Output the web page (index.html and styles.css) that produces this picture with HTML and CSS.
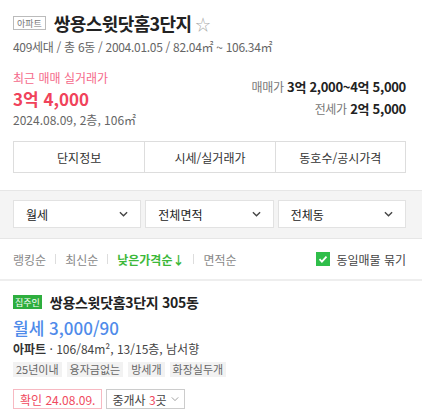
FILE: index.html
```html
<!DOCTYPE html>
<html lang="ko">
  <head>
    <meta charset="UTF-8" />
    <meta name="viewport" content="width=device-width, initial-scale=1" />
    <title>쌍용스윗닷홈3단지</title>
    <link rel="stylesheet" href="styles.css">
  </head>
  <body>
    <!-- 단지 요약 -->
    <div class="summary">
      <div class="title-row">
        <span class="type-badge">아파트</span>
        <h1 class="title">쌍용스윗닷홈3단지</h1>
        <span class="star">☆</span>
      </div>
      <div class="meta">409세대 / 총 6동 / 2004.01.05 / 82.04㎡ ~ 106.34㎡</div>

      <div class="price-row">
        <div class="recent">
          <div class="recent-label">최근 매매 실거래가</div>
          <div class="recent-price">3억 4,000</div>
          <div class="recent-date">2024.08.09, 2층, 106㎡</div>
        </div>
        <div class="ranges">
          <div class="range"><span class="range-label">매매가</span> <b>3억 2,000~4억 5,000</b></div>
          <div class="range"><span class="range-label">전세가</span> <b>2억 5,000</b></div>
        </div>
      </div>

      <div class="tabs">
        <button class="tab">단지정보</button>
        <button class="tab">시세/실거래가</button>
        <button class="tab">동호수/공시가격</button>
      </div>
    </div>

    <!-- 필터 -->
    <div class="filters">
      <div class="select">월세 <svg class="chev" viewBox="0 0 10 6"><path d="M1 1l4 4 4-4" /></svg></div>
      <div class="select">전체면적 <svg class="chev" viewBox="0 0 10 6"><path d="M1 1l4 4 4-4" /></svg></div>
      <div class="select">전체동 <svg class="chev" viewBox="0 0 10 6"><path d="M1 1l4 4 4-4" /></svg></div>
    </div>

    <!-- 정렬 -->
    <div class="sort-row">
      <div class="sorts">
        <span>랭킹순</span><i class="sep"></i>
        <span>최신순</span><i class="sep"></i>
        <span class="on">낮은가격순↓</span><i class="sep"></i>
        <span>면적순</span>
      </div>
      <label class="bundle">
        <span class="check"><svg viewBox="0 0 14 14"><path d="M3.5 7.2l2.4 2.4 4.6-5" /></svg></span>
        동일매물 묶기
      </label>
    </div>

    <!-- 매물 -->
    <div class="item">
      <div class="item-title">
        <span class="owner-badge">집주인</span>
        <span class="item-name">쌍용스윗닷홈3단지 305동</span>
      </div>
      <div class="item-price">월세 3,000/90</div>
      <div class="item-spec"><b>아파트</b> · 106/84m², 13/15층, 남서향</div>
      <div class="tags">
        <span class="tag">25년이내</span>
        <span class="tag">융자금없는</span>
        <span class="tag">방세개</span>
        <span class="tag">화장실두개</span>
      </div>
      <div class="item-foot">
        <span class="confirm">확인 24.08.09.</span>
        <span class="agents">중개사&nbsp;<em>3</em>곳<svg class="chev small" viewBox="0 0 10 6"><path d="M1 1l4 4 4-4" /></svg></span>
      </div>
    </div>
  </body>
</html>
```

FILE: styles.css
```css
* {
  box-sizing: border-box;
}
html,
body {
  margin: 0;
  padding: 0;
  background: #fff;
  color: #222;
  font-family: "Noto Sans CJK KR", "Noto Sans", sans-serif;
  font-size: 12px;
  overflow: hidden;
}

/* 단지 요약 */
.summary {
  padding: 10px 16px 0 13px;
}
.title-row {
  display: flex;
  align-items: center;
  height: 26px;
}
.type-badge {
  display: inline-flex;
  align-items: center;
  height: 14px;
  padding: 0 3px;
  border: 1px solid #bbb;
  color: #777;
  font-size: 9px;
  margin-right: 8px;
}
.title {
  margin: 0;
  font-size: 18px;
  font-weight: bold;
  letter-spacing: -0.6px;
  color: #222;
}
.star {
  margin-left: 4px;
  font-size: 15px;
  color: #aaa;
}
.meta {
  margin-top: 2px;
  font-size: 12px;
  color: #666;
  letter-spacing: -0.3px;
}
.price-row {
  display: flex;
  justify-content: space-between;
  margin-top: 14px;
}
.recent-label {
  color: #f5688a;
  font-size: 12px;
}
.recent-price {
  margin-top: 1px;
  color: #f0435b;
  font-size: 17px;
  font-weight: bold;
  line-height: 24px;
}
.recent-date {
  color: #666;
  font-size: 12px;
}
.ranges {
  margin-top: 7px;
  text-align: right;
  line-height: 22px;
}
.range {
  font-size: 13px;
  color: #222;
  letter-spacing: -0.3px;
}
.range b {
  font-weight: 600;
}
.range-label {
  color: #777;
  font-size: 12px;
}
.tabs {
  display: grid;
  grid-template-columns: repeat(3, 1fr);
  margin-top: 13px;
  border: 1px solid #ddd;
}
.tab {
  height: 30px;
  border: none;
  border-left: 1px solid #ddd;
  background: #fff;
  font-family: inherit;
  font-size: 12px;
  color: #333;
  padding: 0;
}
.tab:first-child {
  border-left: none;
}

/* 필터 */
.filters {
  display: grid;
  grid-template-columns: repeat(3, 1fr);
  gap: 4px;
  margin-top: 17px;
  padding: 9px 16px 10px 13px;
  background: #f4f4f4;
  border-top: 1px solid #e6e6e6;
  border-bottom: 1px solid #e6e6e6;
}
.select {
  display: flex;
  justify-content: space-between;
  align-items: center;
  height: 28px;
  padding: 0 12px 0 12px;
  background: #fff;
  border: 1px solid #e2e2e2;
  font-size: 12px;
  color: #222;
}
.chev {
  width: 9px;
  height: 6px;
  fill: none;
  stroke: #444;
  stroke-width: 1.5;
}
.chev.small {
  width: 8px;
  margin-left: 4px;
  stroke: #888;
  stroke-width: 1;
}

/* 정렬 */
.sort-row {
  display: flex;
  justify-content: space-between;
  align-items: center;
  height: 42px;
  padding: 0 16px 0 13px;
  border-bottom: 2px solid #eee;
}
.sorts {
  display: flex;
  align-items: center;
  color: #888;
  font-size: 12px;
}
.sorts .on {
  color: #3cb83a;
  font-weight: bold;
}
.sep {
  width: 1px;
  height: 10px;
  background: #ddd;
  margin: 0 9px;
}
.bundle {
  display: flex;
  align-items: center;
  gap: 6px;
  font-size: 12px;
  color: #444;
}
.check {
  display: inline-flex;
  width: 14px;
  height: 14px;
  background: #2fbe4a;
}
.check svg {
  width: 14px;
  height: 14px;
  fill: none;
  stroke: #fff;
  stroke-width: 1.8;
}

/* 매물 */
.item {
  padding: 11px 16px 0 13px;
}
.item-title {
  display: flex;
  align-items: center;
}
.owner-badge {
  display: inline-flex;
  align-items: center;
  height: 14px;
  padding: 0 2px;
  background: #2eae3e;
  color: #fff;
  font-size: 9px;
  margin-right: 8px;
}
.item-name {
  font-size: 14px;
  font-weight: bold;
  letter-spacing: -0.3px;
}
.item-price {
  margin-top: 4px;
  font-size: 17px;
  line-height: 24px;
  color: #4f8bea;
  font-weight: 500;
}
.item-spec {
  font-size: 12px;
  color: #444;
}
.item-spec b {
  color: #333;
}
.tags {
  display: flex;
  gap: 5px;
  margin-top: 5px;
}
.tag {
  padding: 0 3px;
  background: #f2f2f2;
  color: #666;
  font-size: 11px;
  line-height: 15px;
}
.item-foot {
  display: flex;
  gap: 4px;
  margin-top: 12px;
}
.confirm,
.agents {
  display: inline-flex;
  align-items: center;
  height: 20px;
  padding: 0 6px;
  font-size: 12px;
}
.confirm {
  border: 1px solid #f7b9c2;
  color: #f04a60;
}
.agents {
  padding: 0 5px;
  border: 1px solid #ccc;
  color: #444;
}
.agents em {
  font-style: normal;
  color: #f04a60;
}
```
